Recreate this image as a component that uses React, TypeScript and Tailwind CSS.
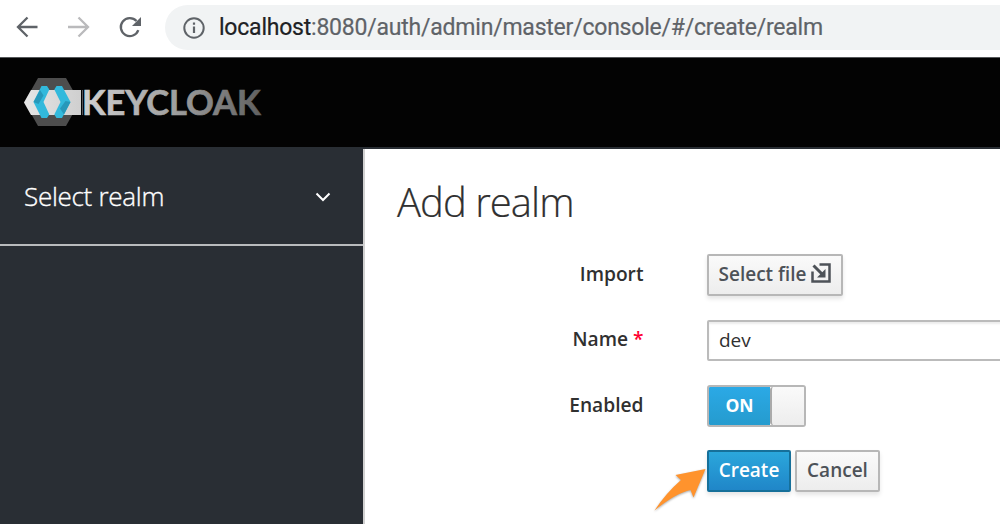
import type { ReactNode } from "react";

function BrowserBar() {
  return (
    <div className="flex h-[57px] shrink-0 items-start bg-white">
      <svg className="mt-[15px] ml-[15px] h-6 w-[135px] shrink-0" viewBox="0 0 135 24" fill="none">
        <path d="M22.5 12H3.5M12.5 2.5L3 12l9.5 9.5" stroke="#5f6368" strokeWidth="2.3" />
        <path d="M53 12h19.500M63.500 2.500L73 12l-9.500 9.500" stroke="#bababc" strokeWidth="2.300" />
        <path d="M123.300 15.100A9 9 0 1 1 121.500 6" stroke="#5f6368" strokeWidth="2.300" />
        <path d="M126 2v9h-9z" fill="#5f6368" />
      </svg>
      <div className="mt-[5px] ml-[15px] flex h-[45px] flex-1 items-center rounded-l-full bg-[#f1f3f4] pl-[18px]">
        <svg className="h-[22px] w-[22px] shrink-0" viewBox="0 0 22 22" fill="none">
          <circle cx="11" cy="11" r="9.700" stroke="#5f6368" strokeWidth="2" />
          <path d="M11 9.500v6.500M11 5.500v2.300" stroke="#5f6368" strokeWidth="2.200" />
        </svg>
        <div className="ml-[14px] font-['Roboto',sans-serif] text-[23px] leading-[30px] tracking-[-0.22px] whitespace-nowrap text-[#5f6368] [-webkit-text-stroke:0.2px]">
          <span className="text-[#202124]">localhost</span>:8080/auth/admin/master/console/#/create/realm
        </div>
      </div>
    </div>
  );
}

function Logo() {
  return (
    <svg className="h-[50px] w-[240px]" viewBox="0 0 240 50">
      <defs>
        <linearGradient id="word" gradientUnits="userSpaceOnUse" x1="60" x2="238" y1="0" y2="0">
          <stop offset="0" stopColor="#d0d0d0" />
          <stop offset="0.5" stopColor="#a0a0a0" />
          <stop offset="1" stopColor="#606060" />
        </linearGradient>
        <linearGradient id="band" x1="0" x2="1" y1="0" y2="0">
          <stop offset="0" stopColor="#e6e6e6" />
          <stop offset="1" stopColor="#cfcfcf" />
        </linearGradient>
      </defs>
      <path d="M14 1h28l13.500 24L42 49H14L0.500 25z" fill="#4d4d4d" />
      <path d="M7 13h50v25H7L0 25.500z" fill="url(#band)" />
      <path d="M17.500 9H23l2.300 3.500L19.500 25l5.800 12.500L23 41h-5.500L9.500 25z" fill="#32b9dc" />
      <path d="M9.500 25L16 13l3.500 5.500L14.500 27z" fill="#2798ba" />
      <path d="M32.500 9H38l8.500 16L38 41h-5.500l-2.200-3.500L36.500 25l-6.200-12.500z" fill="#32b9dc" />
      <path d="M46.500 25L40 37.500l-4-6L41.500 24z" fill="#2798ba" />
      <path d="M58 13h1v25h-1z" fill="#555" />
      <text x="58" y="37.500" fill="url(#word)" stroke="url(#word)" strokeWidth="0.700" fontFamily="Lato, sans-serif" fontSize="33.500" fontWeight="700" textLength="178.500" lengthAdjust="spacingAndGlyphs">KEYCLOAK</text>
    </svg>
  );
}

function Row({ label, children }: { label?: ReactNode; children: ReactNode }) {
  return (
    <div className="flex h-[42px] items-center">
      <div className="w-[278.500px] shrink-0 pb-px text-right text-[19.200px] font-semibold text-[#303030]">{label}</div>
      <div className="ml-[63.500px] flex min-w-0 flex-1 gap-1">{children}</div>
    </div>
  );
}

const button =
  "flex h-[42px] shrink-0 items-center justify-center rounded-[2px] border-2 pb-px text-[19px] font-semibold shadow-[0_3px_4px_rgba(3,3,3,0.1)] whitespace-nowrap";
const plain = "border-[#b7b7b7] bg-linear-to-b from-[#fafafa] to-[#ededed] text-[#4d5258]";

export default function App() {
  return (
    <div className="flex h-[524px] w-[1000px] flex-col overflow-hidden bg-white font-['Open_Sans',sans-serif]">
      <BrowserBar />
      <header className="h-[92px] shrink-0 border-t border-b-2 border-t-[#55585a] border-b-[#292e34] bg-[#030303] pt-[19px] pl-[24px]">
        <Logo />
      </header>
      <div className="flex min-h-0 flex-1">
        <aside className="w-[365px] shrink-0 border-r-2 border-[#d1d1d1] bg-[#292e34]">
          <div className="flex h-[97px] items-center justify-between border-b-2 border-[#b9bbbd] pr-[32px] pl-6 text-white">
            <span className="text-[26px] font-light tracking-[-0.28px] [-webkit-text-stroke:0.35px]">Select realm</span>
            <svg className="h-[10px] w-4" viewBox="0 0 16 10" fill="none">
              <path d="M1.500 1.500L8 8l6.500-6.500" stroke="white" strokeWidth="2" />
            </svg>
          </div>
        </aside>
        <main className="relative min-w-0 flex-1 bg-white">
          <h1 className="mt-[24px] ml-[32px] h-[57px] text-[40px] leading-[57px] font-light tracking-[-0.95px] whitespace-nowrap text-[#303030] [-webkit-text-stroke:0.2px]">Add realm</h1>
          <div className="mt-[24px] flex flex-col gap-[23.300px]">
            <Row label="Import">
              <button className={`${button} ${plain} w-[136px] gap-[5px]`}>
                Select file
                <svg className="mb-[3px] h-5 w-5" viewBox="0 0 20 20" fill="none">
                  <path d="M8.500 1.500h10v17H1.500V8.500" stroke="#4d5258" strokeWidth="2.500" />
                  <path d="M2.500 2.500l9 9" stroke="#4d5258" strokeWidth="3" />
                  <path d="M14.500 6v8.500H6z" fill="#4d5258" />
                </svg>
              </button>
            </Row>
            <Row label={<>Name <span className="text-[#ff0030]">*</span></>}>
              <input
                className="h-[41px] w-[400px] shrink-0 rounded-[2px] border-2 border-[#bbb] bg-white px-[10px] text-[19px] text-[#303030] shadow-[inset_0_2px_2px_rgba(3,3,3,0.075)] outline-none"
                defaultValue="dev"
              />
            </Row>
            <Row label="Enabled">
              <div className="flex h-[42px] w-[99px] overflow-hidden rounded-[3px] border-2 border-[#b7b7b7]">
                <div className="flex w-[61px] items-center justify-center bg-linear-to-b from-[#2ba9e6] to-[#259bce] pb-px text-[17.500px] font-bold text-white">ON</div>
                <div className="flex-1 rounded-l-[3px] border-l-2 border-[#aaa] bg-linear-to-b from-[#fafafa] to-[#ededed]" />
              </div>
            </Row>
            <Row>
              <button className={`${button} w-[84px] border-[#16709a] bg-linear-to-b from-[#2ba7dc] to-[#2086c8] text-white`}>Create</button>
              <button className={`${button} ${plain} w-[85px]`}>Cancel</button>
            </Row>
          </div>
          <svg className="absolute top-[316px] left-[286px] h-[50px] w-[56px] drop-shadow-[0_1px_1px_rgba(0,0,0,0.35)]" viewBox="0 0 56 50">
            <path d="M54.500 4L42.500 32.500L39.500 25Q25 28 3.500 45.500Q15 28 30 15L24.500 10z" fill="#ff932d" />
          </svg>
        </main>
      </div>
    </div>
  );
}
